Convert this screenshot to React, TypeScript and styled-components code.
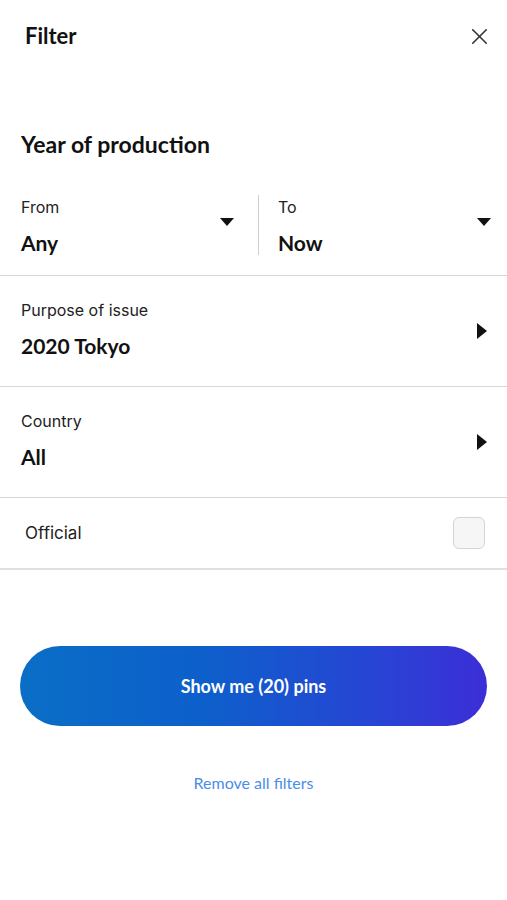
import React, { useState } from 'react';
import styled, { createGlobalStyle } from 'styled-components';
import { X } from 'lucide-react';

const GlobalStyle = createGlobalStyle`
  * {
    box-sizing: border-box;
  }
  body {
    margin: 0;
    background: #fff;
    font-family: 'Lato', 'Noto Sans', sans-serif;
    color: #111;
  }
`;

type Option = {
  label: string;
  value: string;
};

const rows: Option[] = [
  { label: 'Purpose of issue', value: '2020 Tokyo' },
  { label: 'Country', value: 'All' },
];

const App: React.FC = () => {
  const [official, setOfficial] = useState(false);

  return (
    <>
      <GlobalStyle />
      <Page>
        <Header>
          <Title>Filter</Title>
          <CloseButton type="button" aria-label="Close">
            <X size={27} strokeWidth={1.4} />
          </CloseButton>
        </Header>

        <SectionTitle>Year of production</SectionTitle>

        {/* from / to range */}
        <YearRow>
          <YearCell>
            <CellText>
              <Label>From</Label>
              <Value>Any</Value>
            </CellText>
            <DownArrow />
          </YearCell>
          <Divider />
          <YearCell $right>
            <CellText>
              <Label>To</Label>
              <Value>Now</Value>
            </CellText>
            <DownArrow />
          </YearCell>
        </YearRow>

        {rows.map((row) => (
          <LinkRow key={row.label}>
            <CellText>
              <Label>{row.label}</Label>
              <Value>{row.value}</Value>
            </CellText>
            <RightArrow />
          </LinkRow>
        ))}

        <CheckRow onClick={() => setOfficial(!official)}>
          <CheckLabel>Official</CheckLabel>
          <CheckBox $checked={official} />
        </CheckRow>

        <Footer>
          <ShowButton type="button">Show me (20) pins</ShowButton>
          <RemoveLink type="button">Remove all filters</RemoveLink>
        </Footer>
      </Page>
    </>
  );
};

const Page = styled.div`
  width: 507px;
  min-height: 900px;
  background: #fff;
`;

const Header = styled.header`
  height: 72px;
  display: flex;
  align-items: center;
  justify-content: space-between;
  padding: 0 10px 0 25px;
`;

const Title = styled.h1`
  margin: 0;
  font-size: 22px;
  line-height: 24px;
  font-weight: 700;
  color: #111;
`;

const CloseButton = styled.button`
  width: 36px;
  height: 36px;
  display: flex;
  align-items: center;
  justify-content: center;
  padding: 0;
  border: none;
  background: transparent;
  color: #333;
  cursor: pointer;
`;

const SectionTitle = styled.h2`
  margin: 60px 0 0;
  padding-left: 21px;
  font-size: 23px;
  line-height: 24px;
  font-weight: 700;
  color: #111;
`;

const YearRow = styled.div`
  margin-top: 24px;
  height: 96px;
  display: grid;
  grid-template-columns: 258px 1px 1fr;
  align-items: center;
  border-bottom: 1px solid #d6d6d6;
`;

const YearCell = styled.div<{ $right?: boolean }>`
  height: 100%;
  display: flex;
  align-items: center;
  justify-content: space-between;
  padding: ${(p) => (p.$right ? '0 16px 0 19px' : '0 24px 0 21px')};
`;

const Divider = styled.div`
  width: 1px;
  height: 60px;
  margin-top: -6px;
  background: #cfcfcf;
`;

const CellText = styled.div`
  display: flex;
  flex-direction: column;
  gap: 15px;
  margin-top: -3px;
`;

const Label = styled.span`
  font-family: 'Inter', 'Roboto', sans-serif;
  font-size: 16px;
  line-height: 18px;
  color: #222;
`;

const Value = styled.span`
  font-size: 21px;
  line-height: 24px;
  font-weight: 700;
  color: #111;
`;

const DownArrow = styled.span`
  width: 0;
  height: 0;
  margin-top: -12px;
  border-left: 7px solid transparent;
  border-right: 7px solid transparent;
  border-top: 8px solid #111;
`;

const LinkRow = styled.div`
  height: 111px;
  display: flex;
  align-items: center;
  justify-content: space-between;
  padding: 0 20px 0 21px;
  border-bottom: 1px solid #d6d6d6;
  cursor: pointer;
`;

const RightArrow = styled.span`
  width: 0;
  height: 0;
  border-top: 8px solid transparent;
  border-bottom: 8px solid transparent;
  border-left: 10px solid #111;
`;

const CheckRow = styled.label`
  height: 72px;
  display: flex;
  align-items: center;
  justify-content: space-between;
  padding: 0 22px 0 25px;
  border-bottom: 2px solid #e0e0e0;
  cursor: pointer;
`;

const CheckLabel = styled.span`
  font-family: 'Inter', 'Roboto', sans-serif;
  font-size: 17px;
  color: #222;
`;

const CheckBox = styled.span<{ $checked: boolean }>`
  width: 32px;
  height: 32px;
  border-radius: 6px;
  border: 1.5px solid #d4d4d4;
  background: ${(p) => (p.$checked ? '#0a6dc6' : '#f6f6f6')};
`;

const Footer = styled.div`
  display: flex;
  flex-direction: column;
  align-items: center;
  padding: 76px 20px 0;
`;

const ShowButton = styled.button`
  width: 100%;
  height: 80px;
  border: none;
  border-radius: 40px;
  background: linear-gradient(90deg, #0a6ec6 0%, #0d5fcb 40%, #2745d4 75%, #3c2ed7 100%);
  color: #fff;
  font-family: 'Lato', sans-serif;
  font-size: 18px;
  font-weight: 700;
  cursor: pointer;
`;

const RemoveLink = styled.button`
  margin-top: 47px;
  padding: 0;
  border: none;
  background: transparent;
  color: #4a8ee8;
  font-family: 'Lato', sans-serif;
  font-size: 16px;
  line-height: 20px;
  cursor: pointer;
`;

export default App;
